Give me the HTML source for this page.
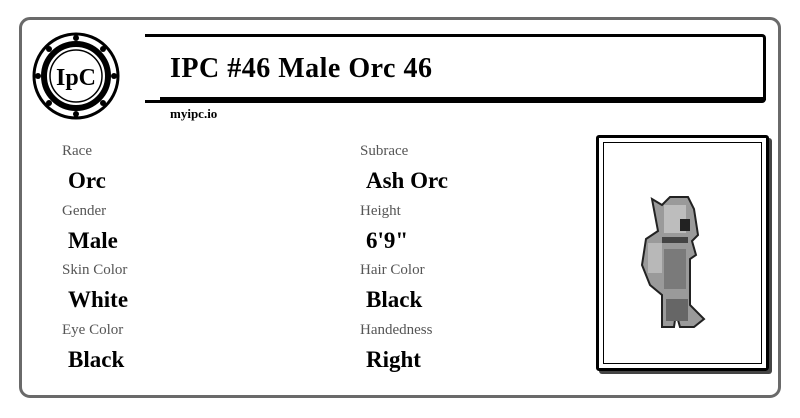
<!DOCTYPE html>
<html><head><style>
body{margin:0;width:800px;height:418px;background:#fff;position:relative;overflow:hidden;font-family:"Liberation Serif",serif}
.card{position:absolute;left:19px;top:17px;width:756px;height:375px;border:3px solid #6a6a6a;border-radius:11px}
.t{position:absolute;left:145px;top:34px;width:618px;height:63px;border:3px solid #000;border-left:none;border-radius:0 4px 4px 0}
.t2{position:absolute;left:160px;top:97px;width:606px;height:3px;background:#000}
.tt{position:absolute;left:170px;top:53px;font-size:28px;font-weight:bold;letter-spacing:0.5px}
.url{position:absolute;left:170px;top:106px;font-size:13px;font-weight:bold}
.l{position:absolute;font-size:15px;color:#555}
.v{position:absolute;font-size:23px;font-weight:bold;color:#000}
.frame{position:absolute;left:596px;top:135px;width:167px;height:230px;border:3px solid #000;border-radius:3px;box-shadow:3px 3px 0 #444}
.frame2{position:absolute;left:4px;top:4px;right:4px;bottom:4px;border:1px solid #000}
</style></head><body>
<div class="card"></div>
<svg style="position:absolute;left:30px;top:30px" width="92" height="92" viewBox="0 0 92 92">
<circle cx="46" cy="46" r="42" fill="#fff" stroke="#000" stroke-width="3"/>
<circle cx="46" cy="46" r="32" fill="none" stroke="#000" stroke-width="6"/>
<circle cx="46" cy="46" r="26" fill="#fff" stroke="#000" stroke-width="1.5"/>
<g fill="#000"><circle cx="46" cy="8" r="3"/><circle cx="46" cy="84" r="3"/><circle cx="8" cy="46" r="3"/><circle cx="84" cy="46" r="3"/><circle cx="19" cy="19" r="3"/><circle cx="73" cy="19" r="3"/><circle cx="19" cy="73" r="3"/><circle cx="73" cy="73" r="3"/></g>
<text x="46" y="55" text-anchor="middle" font-family="Liberation Serif" font-size="24" font-weight="bold">IpC</text>
</svg>
<div class="t"></div><div class="t2"></div>
<div class="tt">IPC #46 Male Orc 46</div>
<div class="url">myipc.io</div>
<div class="l" style="left:62px;top:143px">Race</div><div class="v" style="left:68px;top:168px">Orc</div>
<div class="l" style="left:62px;top:203px">Gender</div><div class="v" style="left:68px;top:228px">Male</div>
<div class="l" style="left:62px;top:262px">Skin Color</div><div class="v" style="left:68px;top:287px">White</div>
<div class="l" style="left:62px;top:322px">Eye Color</div><div class="v" style="left:68px;top:347px">Black</div>
<div class="l" style="left:360px;top:143px">Subrace</div><div class="v" style="left:366px;top:168px">Ash Orc</div>
<div class="l" style="left:360px;top:203px">Height</div><div class="v" style="left:366px;top:228px">6'9"</div>
<div class="l" style="left:360px;top:262px">Hair Color</div><div class="v" style="left:366px;top:287px">Black</div>
<div class="l" style="left:360px;top:322px">Handedness</div><div class="v" style="left:366px;top:347px">Right</div>
<div class="frame"><div class="frame2"></div></div>
<svg style="position:absolute;left:640px;top:195px" width="80" height="150" viewBox="0 0 80 150">
<path d="M12 4 L22 10 L30 2 L48 2 L54 14 L58 40 L52 46 L56 60 L50 64 L50 110 L64 124 L54 132 L40 132 L36 118 L34 132 L22 132 L22 100 L10 90 L2 70 L6 44 L18 36 L12 4Z" fill="#9a9a9a" stroke="#222" stroke-width="2"/>
<rect x="24" y="10" width="22" height="28" fill="#bdbdbd"/>
<rect x="40" y="24" width="10" height="12" fill="#222"/>
<rect x="22" y="42" width="26" height="6" fill="#444"/>
<rect x="8" y="48" width="14" height="30" fill="#b8b8b8"/>
<rect x="24" y="54" width="22" height="40" fill="#7a7a7a"/>
<rect x="26" y="104" width="22" height="22" fill="#666"/>
</svg>
</body></html>
